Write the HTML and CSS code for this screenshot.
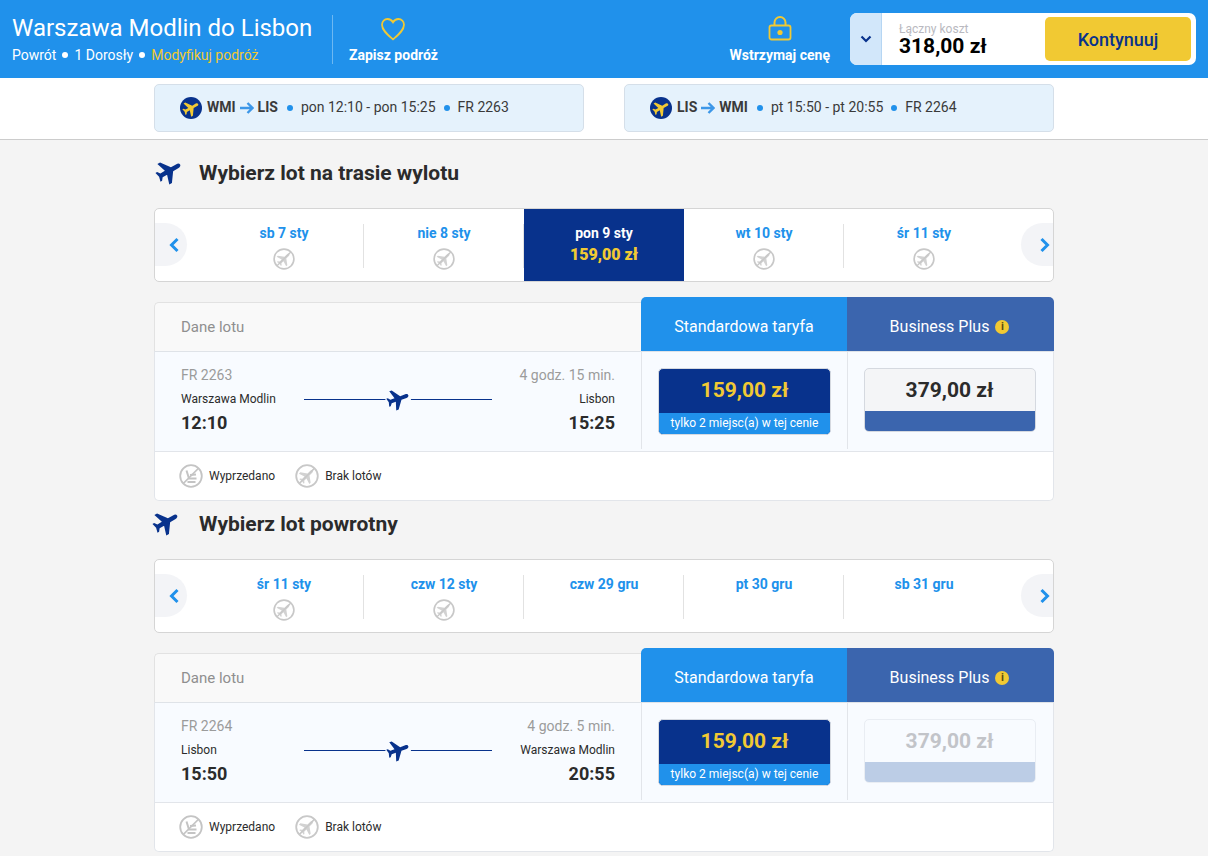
FILE: index.html
```html
<!DOCTYPE html>
<html lang="pl">
<head>
  <meta charset="UTF-8" />
  <title>Warszawa Modlin do Lisbon</title>
  <link rel="stylesheet" href="styles.css">
</head>
<body>
  <svg class="sprites" width="0" height="0">
    <symbol id="plane" viewBox="0 0 24 24">
      <path fill="currentColor" d="M12 1c1.200 0 1.900 1.200 1.900 2.600V9l8.300 6v2.600L13.900 15v4.400l2.400 1.900v1.600L12 21.800l-4.300 1.100v-1.600l2.400-1.900V15l-8.300 2.600V15l8.300-6V3.600C10.100 2.200 10.800 1 12 1z"/>
    </symbol>
    <symbol id="no-flight" viewBox="0 0 24 24">
      <circle cx="12" cy="12" r="10.800" fill="none" stroke="#c8c8c8" stroke-width="1.800"/>
      <path fill="#d2d2d2" transform="rotate(45 12 12) translate(3.360 3.360) scale(.72)" d="M12 1c1.200 0 1.900 1.200 1.900 2.600V9l8.300 6v2.600L13.900 15v4.400l2.400 1.900v1.600L12 21.800l-4.300 1.100v-1.600l2.400-1.900V15l-8.300 2.600V15l8.300-6V3.600C10.100 2.200 10.800 1 12 1z"/>
      <path d="M4.400 19.400 19.400 4.400" stroke="#c8c8c8" stroke-width="1.500"/>
    </symbol>
    <symbol id="no-seat" viewBox="0 0 24 24">
      <circle cx="12" cy="12" r="10.800" fill="none" stroke="#c4c4c4" stroke-width="1.800"/>
      <path d="M7.500 6.500 10 14.500h7.500M11 11l6-.5M8.500 18h8" fill="none" stroke="#c4c4c4" stroke-width="2"/>
      <path d="M4.400 19.400 19.400 4.400" stroke="#c4c4c4" stroke-width="1.500"/>
    </symbol>
    <symbol id="chevron-left" viewBox="0 0 12 16">
      <path d="M9.500 2 3.500 8l6 6" fill="none" stroke="currentColor" stroke-width="3"/>
    </symbol>
    <symbol id="chevron-right" viewBox="0 0 12 16">
      <path d="M2.500 2l6 6-6 6" fill="none" stroke="currentColor" stroke-width="3"/>
    </symbol>
    <symbol id="arrow" viewBox="0 0 14 12">
      <path d="M0 6h12M7.500 1l5 5-5 5" fill="none" stroke="#3c97e8" stroke-width="2.400"/>
    </symbol>
  </svg>

  <header class="topbar">
    <div class="trip">
      <h1>Warszawa Modlin do Lisbon</h1>
      <p class="trip-meta">
        <span>Powrót</span><i class="dot"></i><span>1 Dorosły</span><i class="dot"></i><a class="modify">Modyfikuj podróż</a>
      </p>
    </div>
    <div class="action save">
      <svg class="action-icon" width="26" height="24" viewBox="0 0 26 24">
        <path d="M13 22.300C8 18 2 13.500 2 7.800 2 4.300 4.600 2 7.500 2c2.300 0 4.300 1.200 5.500 3.300C14.200 3.200 16.200 2 18.500 2 21.400 2 24 4.300 24 7.800c0 5.700-6 10.200-11 14.500z" fill="none" stroke="#f1c933" stroke-width="1.800"/>
      </svg>
      <span>Zapisz podróż</span>
    </div>
    <div class="action hold">
      <svg class="action-icon" width="26" height="26" viewBox="0 0 26 26">
        <path d="M7.500 11V7.500a5.500 5.500 0 0 1 11 0V11" fill="none" stroke="#f1c933" stroke-width="2"/>
        <rect x="2.500" y="10.500" width="21" height="14" rx="2" fill="none" stroke="#f1c933" stroke-width="1.800"/>
        <circle cx="13" cy="17.500" r="2.600" fill="#f1c933"/>
      </svg>
      <span>Wstrzymaj cenę</span>
    </div>
    <div class="summary">
      <button class="summary-toggle">
        <svg width="12" height="16" viewBox="0 0 12 8"><path d="M1.500 1.500 6 6l4.500-4.500" fill="none" stroke="#08328c" stroke-width="2.200"/></svg>
      </button>
      <div class="total">
        <span class="total-label">Łączny koszt</span>
        <strong class="total-price">318,00 zł</strong>
      </div>
      <button class="continue">Kontynuuj</button>
    </div>
  </header>

  <nav class="legs">
    <div class="leg">
      <span class="leg-route">
        <span class="leg-badge"><svg width="18" height="18"><use href="#plane"/></svg></span>
        <b class="leg-text">WMI</b><svg width="14" height="12"><use href="#arrow"/></svg><b class="leg-text">LIS</b>
      </span>
      <i class="dot blue"></i><span class="leg-text">pon 12:10 - pon 15:25</span>
      <i class="dot blue"></i><span class="leg-text">FR 2263</span>
    </div>
    <div class="leg">
      <span class="leg-route">
        <span class="leg-badge"><svg width="18" height="18"><use href="#plane"/></svg></span>
        <b class="leg-text">LIS</b><svg width="14" height="12"><use href="#arrow"/></svg><b class="leg-text">WMI</b>
      </span>
      <i class="dot blue"></i><span class="leg-text">pt 15:50 - pt 20:55</span>
      <i class="dot blue"></i><span class="leg-text">FR 2264</span>
    </div>
  </nav>

  <main class="content">
    <section class="flight-section">
      <h2><svg class="heading-plane" width="28" height="28"><use href="#plane"/></svg>Wybierz lot na trasie wylotu</h2>
      <div class="dates">
        <button class="date-arrow prev"><svg width="12" height="16"><use href="#chevron-left"/></svg></button>
        <div class="date"><span>sb 7 sty</span><svg width="22" height="22"><use href="#no-flight"/></svg></div>
        <div class="date"><span>nie 8 sty</span><svg width="22" height="22"><use href="#no-flight"/></svg></div>
        <div class="date selected"><span>pon 9 sty</span><strong>159,00 zł</strong></div>
        <div class="date"><span>wt 10 sty</span><svg width="22" height="22"><use href="#no-flight"/></svg></div>
        <div class="date"><span>śr 11 sty</span><svg width="22" height="22"><use href="#no-flight"/></svg></div>
        <button class="date-arrow next"><svg width="12" height="16"><use href="#chevron-right"/></svg></button>
      </div>
      <div class="fares">
        <div class="fares-head">
          <div class="head-label">Dane lotu</div>
          <div class="fare-tab standard">Standardowa taryfa</div>
          <div class="fare-tab business">Business Plus<i class="info">i</i></div>
        </div>
        <div class="fares-row">
          <div class="flight">
            <span class="muted">FR 2263</span>
            <span></span>
            <span class="muted end">4 godz. 15 min.</span>
            <span class="city">Warszawa Modlin</span>
            <div class="route"><svg width="24" height="24"><use href="#plane"/></svg></div>
            <span class="city end">Lisbon</span>
            <strong class="time">12:10</strong>
            <span></span>
            <strong class="time end">15:25</strong>
          </div>
          <div class="fare-cell">
            <button class="fare-btn picked">
              <span class="fare-price">159,00 zł</span>
              <span class="fare-note">tylko 2 miejsc(a) w tej cenie</span>
            </button>
          </div>
          <div class="fare-cell">
            <button class="fare-btn plus">
              <span class="fare-price">379,00 zł</span>
              <span class="fare-note"></span>
            </button>
          </div>
        </div>
        <div class="legend">
          <span class="legend-item"><svg width="24" height="24"><use href="#no-seat"/></svg>Wyprzedano</span>
          <span class="legend-item"><svg width="24" height="24"><use href="#no-flight"/></svg>Brak lotów</span>
        </div>
      </div>
    </section>

    <section class="flight-section">
      <h2><svg class="heading-plane back" width="28" height="28"><use href="#plane"/></svg>Wybierz lot powrotny</h2>
      <div class="dates">
        <button class="date-arrow prev"><svg width="12" height="16"><use href="#chevron-left"/></svg></button>
        <div class="date"><span>śr 11 sty</span><svg width="22" height="22"><use href="#no-flight"/></svg></div>
        <div class="date"><span>czw 12 sty</span><svg width="22" height="22"><use href="#no-flight"/></svg></div>
        <div class="date"><span>czw 29 gru</span></div>
        <div class="date"><span>pt 30 gru</span></div>
        <div class="date"><span>sb 31 gru</span></div>
        <button class="date-arrow next"><svg width="12" height="16"><use href="#chevron-right"/></svg></button>
      </div>
      <div class="fares">
        <div class="fares-head">
          <div class="head-label">Dane lotu</div>
          <div class="fare-tab standard">Standardowa taryfa</div>
          <div class="fare-tab business">Business Plus<i class="info">i</i></div>
        </div>
        <div class="fares-row">
          <div class="flight">
            <span class="muted">FR 2264</span>
            <span></span>
            <span class="muted end">4 godz. 5 min.</span>
            <span class="city">Lisbon</span>
            <div class="route"><svg width="24" height="24"><use href="#plane"/></svg></div>
            <span class="city end">Warszawa Modlin</span>
            <strong class="time">15:50</strong>
            <span></span>
            <strong class="time end">20:55</strong>
          </div>
          <div class="fare-cell">
            <button class="fare-btn picked">
              <span class="fare-price">159,00 zł</span>
              <span class="fare-note">tylko 2 miejsc(a) w tej cenie</span>
            </button>
          </div>
          <div class="fare-cell">
            <button class="fare-btn plus disabled">
              <span class="fare-price">379,00 zł</span>
              <span class="fare-note"></span>
            </button>
          </div>
        </div>
        <div class="legend">
          <span class="legend-item"><svg width="24" height="24"><use href="#no-seat"/></svg>Wyprzedano</span>
          <span class="legend-item"><svg width="24" height="24"><use href="#no-flight"/></svg>Brak lotów</span>
        </div>
      </div>
    </section>
  </main>
</body>
</html>
```

FILE: styles.css
```css
* {
  box-sizing: border-box;
}
html, body {
  height: 856px;
  overflow: hidden;
}
body {
  margin: 0;
  background: #f4f4f4;
  color: #2b2b2b;
  font-family: Roboto, "Liberation Sans", sans-serif;
  font-size: 14px;
}
button {
  font-family: inherit;
  border: none;
  padding: 0;
}
.sprites {
  position: absolute;
}
.dot {
  display: inline-block;
  width: 6px;
  height: 6px;
  border-radius: 50%;
  background: #fff;
}
.dot.blue {
  background: #2091eb;
}

/* top bar */
.topbar {
  display: flex;
  align-items: center;
  height: 78px;
  padding: 0 12px;
  background: #2091eb;
  color: #fff;
}
.trip {
  width: 321px;
  height: 49px;
  border-right: 1px solid #6db8f2;
}
.trip h1 {
  margin: 0;
  font-size: 24px;
  font-weight: 400;
  line-height: 26px;
}
.trip-meta {
  display: flex;
  align-items: center;
  gap: 6px;
  margin: 5px 0 0;
  line-height: 18px;
}
.modify {
  color: #f1c933;
}
.action {
  display: flex;
  flex-direction: column;
  align-items: center;
  align-self: flex-start;
  font-weight: 700;
  line-height: 18px;
}
.save {
  margin-left: 16px;
  padding-top: 17px;
  gap: 5px;
}
.hold {
  margin-left: auto;
  margin-right: 20px;
  padding-top: 15px;
  gap: 5px;
}
.summary {
  display: flex;
  align-items: center;
  width: 346px;
  height: 52px;
  padding-right: 5px;
  background: #fff;
  border-radius: 7px;
  overflow: hidden;
}
.summary-toggle {
  display: flex;
  align-items: center;
  justify-content: center;
  width: 32px;
  height: 100%;
  background: #d2e7fa;
  border-right: 1px solid #b6d6f3;
}
.total {
  display: flex;
  flex-direction: column;
  flex: 1;
  padding-left: 17px;
}
.total-label {
  color: #b9b9c0;
  font-size: 12px;
  line-height: 14px;
}
.total-price {
  margin-top: -1px;
  color: #000;
  font-size: 21px;
  line-height: 22px;
  font-weight: 700;
}
.continue {
  width: 146px;
  height: 44px;
  background: #f1c933;
  color: #08328c;
  border-radius: 5px;
  font-size: 18px;
  font-weight: 500;
}

/* legs under the top bar */
.legs {
  display: flex;
  justify-content: center;
  gap: 40px;
  height: 62px;
  padding-top: 6px;
  background: #fff;
  border-bottom: 1px solid #ccc;
}
.leg {
  display: flex;
  align-items: center;
  gap: 8px;
  width: 430px;
  height: 48px;
  padding: 0 25px;
  background: #e5f2fc;
  border: 1px solid #d5dfe9;
  border-radius: 5px;
  color: #3a3a3a;
}
.leg-route {
  display: flex;
  align-items: center;
  gap: 4px;
  margin-right: 1px;
}
.leg-text {
  padding-bottom: 2px;
}
.leg b {
  font-weight: 700;
}
.leg-badge {
  display: flex;
  align-items: center;
  justify-content: center;
  width: 22px;
  height: 22px;
  margin-right: 1px;
  border-radius: 50%;
  background: #08328c;
  color: #f1c933;
}
.leg-badge svg {
  transform: rotate(60deg);
}

/* main column */
.content {
  width: 900px;
  margin: 0 auto;
  padding-top: 18px;
}
.flight-section {
  margin-bottom: 8px;
}
.flight-section h2 {
  display: flex;
  align-items: center;
  height: 28px;
  margin: 0 0 22px;
  padding-top: 2px;
  font-size: 21px;
  font-weight: 700;
  gap: 16px;
}
.heading-plane {
  margin: 0 0 4px 1px;
  color: #08328c;
  transform: rotate(60deg);
}
.heading-plane.back {
  margin-left: -2px;
  margin-right: 3px;
}

/* date strip */
.dates {
  display: flex;
  justify-content: center;
  position: relative;
  height: 74px;
  background: #fff;
  border: 1px solid #d5d5d5;
  border-radius: 5px;
}
.date {
  position: relative;
  display: flex;
  flex-direction: column;
  align-items: center;
  gap: 6px;
  width: 160px;
  padding-top: 16px;
  color: #2091eb;
  font-weight: 700;
  line-height: 17px;
}
.date + .date::before {
  content: "";
  position: absolute;
  left: -1px;
  top: 15px;
  height: 44px;
  border-left: 1px solid #e2e2e2;
}
.date.selected + .date::before {
  display: none;
}
.date.selected {
  background: #08328c;
  color: #fff;
}
.date.selected strong {
  color: #f1c933;
  font-size: 16px;
  line-height: 18px;
  margin-top: -2px;
}
.date-arrow {
  position: absolute;
  top: 14px;
  display: flex;
  align-items: center;
  justify-content: center;
  width: 32px;
  height: 43px;
  background: #f3f4f7;
  color: #2091eb;
}
.date-arrow.prev {
  left: 0;
  padding-left: 6px;
  border-radius: 0 22px 22px 0;
}
.date-arrow.next {
  right: 0;
  padding-left: 16px;
  border-radius: 22px 0 0 22px;
}

/* fares table */
.fares {
  margin-top: 15px;
}
.fares-head {
  display: flex;
  align-items: flex-end;
  height: 54px;
}
.head-label {
  flex: 1;
  height: 49px;
  padding-left: 26px;
  background: #f9f9f9;
  border: 1px solid #e2e2e2;
  border-bottom: none;
  border-right: none;
  border-radius: 5px 0 0 0;
  color: #8f8f8f;
  font-size: 15px;
  line-height: 48px;
}
.fare-tab {
  display: flex;
  align-items: center;
  justify-content: center;
  height: 54px;
  padding-top: 5px;
  color: #fff;
  font-size: 16px;
  gap: 6px;
}
.fare-tab.standard {
  width: 206px;
  background: #2091eb;
  border-radius: 5px 0 0 0;
}
.fare-tab.business {
  width: 207px;
  padding-right: 2px;
  background: #3b65ae;
  border-radius: 0 5px 0 0;
}
.info {
  width: 14px;
  height: 14px;
  border-radius: 50%;
  background: #f1c933;
  color: #5a4a10;
  font-size: 11px;
  font-style: normal;
  font-weight: 700;
  line-height: 14px;
  text-align: center;
}
.fares-row {
  display: flex;
  height: 101px;
  background: #f8fbff;
  border: 1px solid #e2e5ea;
  border-top: 1px solid #dfe3e8;
}
.flight {
  flex: 1;
  display: grid;
  grid-template-columns: 1fr 188px 1fr;
  grid-template-rows: 17px 24px 14px;
  row-gap: 4px;
  align-items: center;
  padding: 14px 26px 0;
}
.muted {
  color: #9b9b9b;
}
.end {
  text-align: right;
}
.city {
  font-size: 12px;
  white-space: nowrap;
}
.time {
  font-size: 18px;
  font-weight: 700;
}
.route {
  display: flex;
  justify-content: center;
  align-items: center;
  background: linear-gradient(#08328c, #08328c) center / 100% 1px no-repeat;
  color: #08328c;
}
.route svg {
  background: #f8fbff;
  transform: rotate(70deg);
}
.fare-cell {
  display: flex;
  justify-content: center;
  width: 206px;
  height: 97px;
  padding-top: 16px;
  border-left: 1px solid #e2e5ea;
}
.fare-btn {
  display: flex;
  flex-direction: column;
  width: 173px;
  height: 67px;
  border: 1px solid #d5d9e0;
  border-radius: 5px;
  overflow: hidden;
  background: #f4f5f7;
}
.fare-btn.plus {
  width: 172px;
  height: 64px;
  margin-right: 2px;
}
.fare-price {
  display: block;
  width: 100%;
  height: 44px;
  font-size: 21px;
  font-weight: 700;
  line-height: 42px;
  text-align: center;
  color: #2b2b2b;
}
.plus .fare-price {
  height: 42px;
}
.fare-note {
  display: block;
  flex: 1;
  width: 100%;
  background: #3b65ae;
  color: #fff;
  font-size: 12px;
  line-height: 21px;
  text-align: center;
}
.picked {
  background: #08328c;
}
.picked .fare-price {
  color: #f1c933;
}
.picked .fare-note {
  background: #2091eb;
}
.plus.disabled {
  background: #f8fbff;
  border-color: #e9edf3;
}
.plus.disabled .fare-price {
  color: #c2c4c9;
}
.plus.disabled .fare-note {
  background: #bccde6;
}
.legend {
  display: flex;
  align-items: center;
  gap: 20px;
  height: 49px;
  padding-left: 24px;
  background: #fff;
  border: 1px solid #e2e5ea;
  border-top: none;
  border-radius: 0 0 5px 5px;
  font-size: 12px;
}
.legend-item {
  display: flex;
  align-items: center;
  gap: 6px;
}
```
